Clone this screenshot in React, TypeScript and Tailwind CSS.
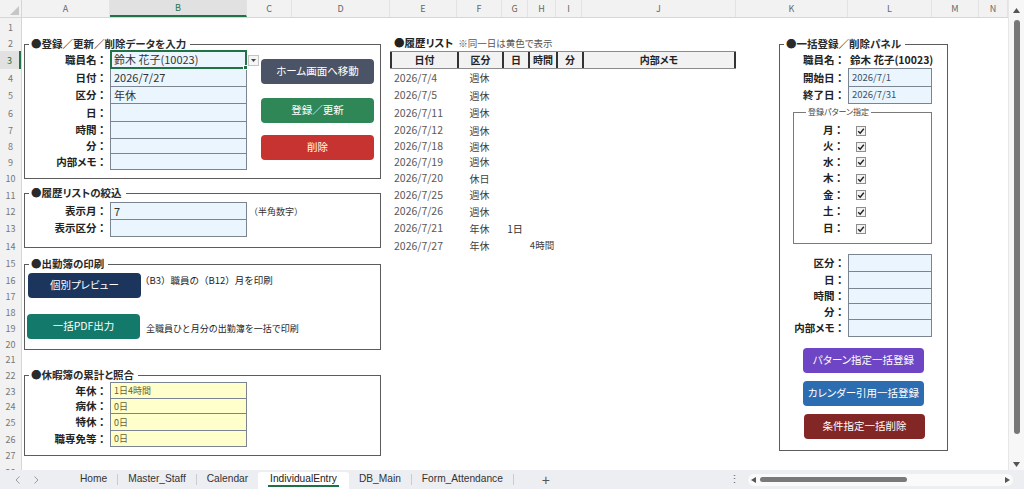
import React from 'react';

const COLS = ['A', 'B', 'C', 'D', 'E', 'F', 'G', 'H', 'I', 'J', 'K', 'L', 'M', 'N'];
const ROWS = Array.from({ length: 28 }, (_, i) => i + 1);

const HIST: [string, string, string, string][] = [
  ['2026/7/4', '週休', '', ''],
  ['2026/7/5', '週休', '', ''],
  ['2026/7/11', '週休', '', ''],
  ['2026/7/12', '週休', '', ''],
  ['2026/7/18', '週休', '', ''],
  ['2026/7/19', '週休', '', ''],
  ['2026/7/20', '休日', '', ''],
  ['2026/7/25', '週休', '', ''],
  ['2026/7/26', '週休', '', ''],
  ['2026/7/21', '年休', '1日', ''],
  ['2026/7/27', '年休', '', '4時間'],
];

const DAYS = ['月', '火', '水', '木', '金', '土', '日'];

type P = { className?: string; children?: React.ReactNode };

// right-aligned bold label; the colon keeps its full width like the sheet font
function Lbl({ className = '', children }: P) {
  return (
    <div className={`flex items-center justify-end pr-[3px] text-[10.5px] font-bold text-[#222] whitespace-nowrap leading-none ${className}`}>
      {children}
      <span className="[font-feature-settings:normal]">：</span>
    </div>
  );
}

function Cell({ className = '', children }: P) {
  return (
    <div className={`-mt-px flex items-center pl-[3px] border border-[#7b8591] whitespace-nowrap leading-none ${className}`}>
      {children}
    </div>
  );
}

function Btn({ className = '', children }: P) {
  return (
    <div className={`self-start h-[25px] w-[113px] rounded-[4px] flex items-center justify-center text-white text-[10.5px] leading-none whitespace-nowrap ${className}`}>
      {children}
    </div>
  );
}

function Box({ className = '', title }: { className?: string; title: string }) {
  return (
    <fieldset className={`border border-[#5c5c5c] min-w-0 ${className}`}>
      <legend className="ml-[4px] pl-[2px] pr-[4px] text-[10.5px] leading-[14px] font-bold text-[#2a2a2a]">{title}</legend>
    </fieldset>
  );
}

function Check() {
  return (
    <div className="ml-[8px] w-[10px] h-[10px] border border-[#8d8d8d] bg-[#f3f3f3] flex items-center justify-center">
      <svg width="8" height="8" viewBox="0 0 8 8">
        <path d="M1.2 4.2 L3.2 6.2 L6.8 1.8" stroke="#222" strokeWidth="1.4" fill="none" />
      </svg>
    </div>
  );
}

function Sheet() {
  return (
    <div className="grid w-[1008px] h-[470px] overflow-hidden grid-cols-[22px_88px_137px_45px_98px_67px_45px_26px_28px_26px_154px_112px_84px_47px_29px] grid-rows-[18px_18px_15px_18px_18px_17px_18px_17px_15px_16px_17px_16px_17px_17px_18px_17px_17px_15px_16px_17px_15px_15px_16px_16px_15px_17px_16px_17px_16px]">
      {/* corner */}
      <div className="col-[1] row-[1] bg-[#f2f2f2] border-r border-b border-[#d6d6d6] flex items-end justify-end p-[2px]">
        <svg width="9" height="9" viewBox="0 0 9 9">
          <path d="M9 0 L9 9 L0 9Z" fill="#c6c6c6" />
        </svg>
      </div>
      {/* column header */}
      <div className="col-[2/16] row-[1] grid grid-cols-subgrid bg-[#f2f2f2] border-b border-[#d6d6d6]">
        {COLS.map((c) => (
          <div
            key={c}
            className={`flex items-center justify-center text-[9px] leading-none border-r border-[#e3e3e3] ${
              c === 'B' ? 'bg-[#e1e1e1] text-[#217346] border-b-2 border-b-[#217346]' : 'text-[#666]'
            }`}
          >
            {c}
          </div>
        ))}
      </div>
      {/* row header */}
      <div className="col-[1] row-[2/30] grid grid-rows-subgrid bg-[#f2f2f2] border-r border-[#d6d6d6]">
        {ROWS.map((r) => (
          <div
            key={r}
            className={`flex items-center justify-center text-[9px] leading-none ${
              r === 3 ? 'bg-[#e1e1e1] text-[#217346] border-r-2 border-[#217346]' : 'text-[#777]'
            }`}
          >
            {r}
          </div>
        ))}
      </div>

      {/* group boxes */}
      <Box className="col-[2/6] row-[3/12] ml-[2px] mr-[9px] mt-[1px] mb-[8px]" title="●登録／更新／削除データを入力" />
      <Box className="col-[2/6] row-[12/16] ml-[2px] mr-[9px] -mt-px mb-[7px]" title="●履歴リストの絞込" />
      <Box className="col-[2/6] row-[16/22] ml-[2px] mr-[9px] mt-[2px] mb-[2px]" title="●出勤簿の印刷" />
      <Box className="col-[2/6] row-[23/29] ml-[2px] mr-[9px] mt-[1px] mb-[8px]" title="●休暇簿の累計と照合" />
      <Box className="col-[12/15] row-[3/29] ml-[43px] mr-[31px] mt-[1px] mb-[13px]" title="●一括登録／削除パネル" />
      <fieldset className="col-[12/14] row-[7/16] ml-[57px] mt-[3px] mb-[11px] border border-[#7a7a7a] min-w-0">
        <legend className="ml-[12px] px-[2px] text-[8px] leading-[10px] text-[#444]">登録パターン指定</legend>
      </fieldset>

      {/* entry form */}
      <Lbl className="col-[2] row-[4]">職員名</Lbl>
      <div className="col-[3] row-[4] -mt-px relative z-10 flex items-center pl-[2px] border-2 border-[#217346] bg-[#eaf5fd] text-[11px] text-[#333] whitespace-nowrap leading-none">
        鈴木 花子(10023)
        <span className="absolute -right-[3px] -bottom-[3px] w-[5px] h-[5px] bg-[#217346] border border-white" />
      </div>
      <div className="col-[4] row-[4] self-center ml-px w-[11px] h-[11px] border border-[#c4c4c4] bg-[#f5f5f5] flex items-center justify-center">
        <svg width="5" height="3" viewBox="0 0 5 3">
          <path d="M0 0 L5 0 L2.5 3Z" fill="#444" />
        </svg>
      </div>
      <Lbl className="col-[2] row-[5]">日付</Lbl>
      <Cell className="col-[3] row-[5] bg-[#eaf5fd] text-[11px] text-[#333]">2026/7/27</Cell>
      <Lbl className="col-[2] row-[6]">区分</Lbl>
      <Cell className="col-[3] row-[6] bg-[#eaf5fd] text-[11px] text-[#333]">年休</Cell>
      <Lbl className="col-[2] row-[7]">日</Lbl>
      <Cell className="col-[3] row-[7] bg-[#eaf5fd]" />
      <Lbl className="col-[2] row-[8]">時間</Lbl>
      <Cell className="col-[3] row-[8] bg-[#eaf5fd]" />
      <Lbl className="col-[2] row-[9]">分</Lbl>
      <Cell className="col-[3] row-[9] bg-[#eaf5fd]" />
      <Lbl className="col-[2] row-[10]">内部メモ</Lbl>
      <Cell className="col-[3] row-[10] bg-[#eaf5fd]" />

      <Btn className="col-[4/6] row-[4/6] ml-[14px] mt-[8px] bg-[#4b5466]">ホーム画面へ移動</Btn>
      <Btn className="col-[4/6] row-[6/9] ml-[14px] mt-[11px] bg-[#2f8657]">登録／更新</Btn>
      <Btn className="col-[4/6] row-[8/11] ml-[14px] mt-[13px] bg-[#c73331]">削除</Btn>

      {/* filter */}
      <Lbl className="col-[2] row-[13]">表示月</Lbl>
      <Cell className="col-[3] row-[13] bg-[#eaf5fd] text-[11px] text-[#333]">7</Cell>
      <Lbl className="col-[2] row-[14]">表示区分</Lbl>
      <Cell className="col-[3] row-[14] bg-[#eaf5fd]" />
      <div className="col-[4/6] row-[13] flex items-center pl-[2px] text-[9px] text-[#333] whitespace-nowrap [font-feature-settings:normal]">（半角数字）</div>

      {/* print */}
      <Btn className="col-[2/4] row-[17/19] ml-[6px] mt-[1px] bg-[#1b355d]">個別プレビュー</Btn>
      <div className="col-[3/6] row-[17] flex items-center ml-[30px] text-[9.5px] text-[#222] whitespace-nowrap [font-feature-settings:normal]">（B3）職員の（B12）月を印刷</div>
      <Btn className="col-[2/4] row-[19/22] ml-[5px] mt-[10px] bg-[#12796b]">一括PDF出力</Btn>
      <div className="col-[3/6] row-[20] flex items-center ml-[36px] text-[9px] text-[#222] whitespace-nowrap [font-feature-settings:normal]">全職員ひと月分の出勤簿を一括で印刷</div>

      {/* leave totals */}
      <Lbl className="col-[2] row-[24]">年休</Lbl>
      <Cell className="col-[3] row-[24] bg-[#ffffcc] text-[9px] text-[#6b5d2c]">1日4時間</Cell>
      <Lbl className="col-[2] row-[25]">病休</Lbl>
      <Cell className="col-[3] row-[25] bg-[#ffffcc] text-[9px] text-[#6b5d2c]">0日</Cell>
      <Lbl className="col-[2] row-[26]">特休</Lbl>
      <Cell className="col-[3] row-[26] bg-[#ffffcc] text-[9px] text-[#6b5d2c]">0日</Cell>
      <Lbl className="col-[2] row-[27]">職専免等</Lbl>
      <Cell className="col-[3] row-[27] bg-[#ffffcc] text-[9px] text-[#6b5d2c]">0日</Cell>

      {/* history list */}
      <div className="col-[6/12] row-[3] flex items-center gap-[5px] pl-[4px] whitespace-nowrap leading-none">
        <span className="text-[10.5px] font-bold text-[#222]">●履歴リスト</span>
        <span className="text-[9.5px] text-[#555]">※同一日は黄色で表示</span>
      </div>
      <div className="col-[6/12] row-[4] grid grid-cols-subgrid border-y border-[#8c8c8c] bg-[#f2f2f2] text-[10px] font-bold text-[#222] leading-none">
        <div className="flex items-center justify-center border-l-2 border-[#333]">日付</div>
        <div className="flex items-center justify-center border-l-2 border-[#333]">区分</div>
        <div className="flex items-center justify-center border-l-2 border-[#333]">日</div>
        <div className="flex items-center justify-center border-l-2 border-[#333]">時間</div>
        <div className="flex items-center justify-center border-l-2 border-[#333]">分</div>
        <div className="flex items-center justify-center border-x-2 border-[#333]">内部メモ</div>
      </div>
      <div className="col-[6/12] row-[5/16] grid grid-cols-subgrid grid-rows-subgrid leading-none whitespace-nowrap">
        {HIST.map(([d, k, n, h], i) => (
          <React.Fragment key={i}>
            <div className="flex items-center pl-[4px] text-[10.5px] text-[#595959]">{d}</div>
            <div className="flex items-center justify-center text-[10px] text-[#404040]">{k}</div>
            <div className="flex items-center justify-center text-[10px] text-[#303030]">{n}</div>
            <div className="flex items-center justify-center text-[9.5px] text-[#404040]">{h}</div>
            <div />
            <div />
          </React.Fragment>
        ))}
      </div>

      {/* bulk panel */}
      <Lbl className="col-[12] row-[4]">職員名</Lbl>
      <div className="col-[13/16] row-[4] flex items-center pl-[2px] text-[10.5px] font-bold text-[#222] whitespace-nowrap leading-none">鈴木 花子(10023)</div>
      <Lbl className="col-[12] row-[5]">開始日</Lbl>
      <Cell className="col-[13] row-[5] bg-[#eaf5fd] text-[9.5px] text-[#3d4f66]">2026/7/1</Cell>
      <Lbl className="col-[12] row-[6]">終了日</Lbl>
      <Cell className="col-[13] row-[6] bg-[#eaf5fd] text-[9.5px] text-[#3d4f66]">2026/7/31</Cell>

      <div className="col-[12/14] row-[8/15] grid grid-cols-subgrid grid-rows-subgrid">
        {DAYS.map((d) => (
          <React.Fragment key={d}>
            <Lbl className="pr-[4px]">{d}</Lbl>
            <div className="flex items-center">
              <Check />
            </div>
          </React.Fragment>
        ))}
      </div>

      <div className="col-[12/14] row-[16/21] grid grid-cols-subgrid grid-rows-subgrid">
        {['区分', '日', '時間', '分', '内部メモ'].map((l) => (
          <React.Fragment key={l}>
            <Lbl>{l}</Lbl>
            <Cell className="bg-[#eaf5fd]" />
          </React.Fragment>
        ))}
      </div>

      <Btn className="col-[12/14] row-[21/24] ml-[67px] mt-[11px] w-[121px] bg-[#6d45c5]">パターン指定一括登録</Btn>
      <Btn className="col-[12/14] row-[23/26] ml-[67px] mt-[14px] w-[121px] bg-[#2c6db2]">カレンダー引用一括登録</Btn>
      <Btn className="col-[12/14] row-[26/28] ml-[68px] w-[121px] bg-[#832626]">条件指定一括削除</Btn>
    </div>
  );
}

function VScroll() {
  return (
    <div className="w-[16px] h-[470px] flex flex-col items-center bg-[#f7f7f7] border-l border-[#e6e6e6]">
      <svg className="mt-[8px]" width="7" height="5" viewBox="0 0 7 5">
        <path d="M3.5 0 L7 5 L0 5Z" fill="#555" />
      </svg>
      <div className="mt-[7px] w-[6px] h-[414px] rounded-full bg-[#777]" />
      <div className="flex-1" />
      <svg className="mb-[3px]" width="7" height="5" viewBox="0 0 7 5">
        <path d="M0 0 L7 0 L3.5 5Z" fill="#555" />
      </svg>
    </div>
  );
}

function Tab({ children }: P) {
  return <div className="h-full flex items-center px-[10px]">{children}</div>;
}

function Sep() {
  return <div className="w-px h-[11px] bg-[#c9cbcf]" />;
}

function TabBar() {
  return (
    <div className="h-[19px] flex items-center bg-[#eceef1] font-['Liberation_Sans',Arial,sans-serif] text-[10.2px] text-[#333] leading-none">
      <div className="w-[70px] h-full flex items-center pl-[15px] gap-[14px]">
        <svg width="5" height="8" viewBox="0 0 5 8">
          <path d="M4.5 0.5 L1 4 L4.5 7.5" stroke="#9a9a9a" strokeWidth="1" fill="none" />
        </svg>
        <svg width="5" height="8" viewBox="0 0 5 8">
          <path d="M0.5 0.5 L4 4 L0.5 7.5" stroke="#9a9a9a" strokeWidth="1" fill="none" />
        </svg>
      </div>
      <Tab>Home</Tab>
      <Sep />
      <Tab>Master_Staff</Tab>
      <Sep />
      <Tab>Calendar</Tab>
      <div className="self-end h-[17px] px-[10px] bg-white rounded-t-[3px] flex items-center">
        <span className="px-[2px] pb-[1px] border-b-2 border-[#1e7145] text-[#222]">IndividualEntry</span>
      </div>
      <Tab>DB_Main</Tab>
      <Sep />
      <Tab>Form_Attendance</Tab>
      <Sep />
      <div className="ml-[28px] text-[14px] text-[#555]">+</div>
      <div className="ml-auto text-[11px] text-[#666]">⋮</div>
      <div className="ml-[8px] mr-[11px] w-[265px] h-[12px] rounded-[6px] bg-[#fafafa] flex items-center px-[3px]">
        <svg width="5" height="6" viewBox="0 0 5 6">
          <path d="M0 3 L5 0 L5 6Z" fill="#555" />
        </svg>
        <div className="ml-[4px] w-[147px] h-[5px] rounded-full bg-[#7a7a7a]" />
        <svg className="ml-auto" width="5" height="6" viewBox="0 0 5 6">
          <path d="M5 3 L0 0 L0 6Z" fill="#555" />
        </svg>
      </div>
    </div>
  );
}

export default function App() {
  return (
    <div className="w-[1024px] h-[489px] overflow-hidden bg-white flex flex-col font-['Noto_Sans_CJK_JP','Noto_Sans',sans-serif] [font-feature-settings:'palt'] text-[#222]">
      <div className="flex h-[470px]">
        <Sheet />
        <VScroll />
      </div>
      <TabBar />
    </div>
  );
}
